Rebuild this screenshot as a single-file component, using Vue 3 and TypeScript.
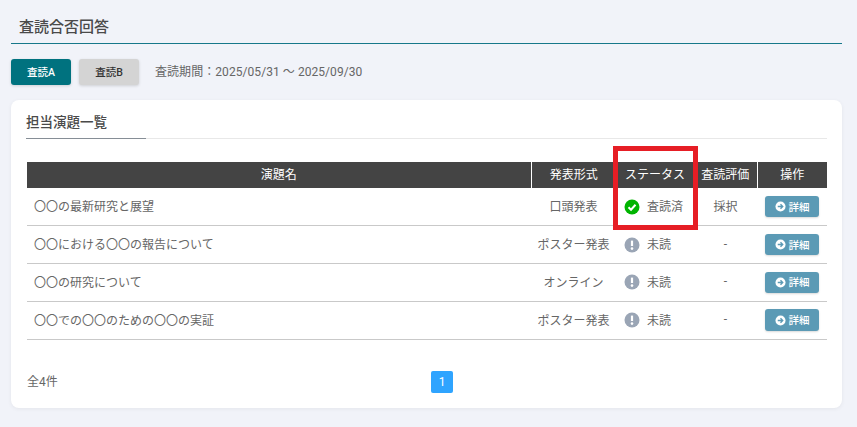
<script setup lang="ts">
interface Row { title: string; format: string; done: boolean; status: string; review: string }
const rows: Row[] = [
  { title: '〇〇の最新研究と展望', format: '口頭発表', done: true, status: '査読済', review: '採択' },
  { title: '〇〇における〇〇の報告について', format: 'ポスター発表', done: false, status: '未読', review: '-' },
  { title: '〇〇の研究について', format: 'オンライン', done: false, status: '未読', review: '-' },
  { title: '〇〇での〇〇のための〇〇の実証', format: 'ポスター発表', done: false, status: '未読', review: '-' },
]
</script>

<template>
  <div class="page">
    <h1 class="page-title">査読合否回答</h1>
    <div class="toolbar">
      <button class="tab tab-active">査読A</button>
      <button class="tab">査読B</button>
      <span class="period">査読期間：2025/05/31 〜 2025/09/30</span>
    </div>
    <section class="card">
      <h2 class="card-title"><span>担当演題一覧</span></h2>
      <table class="table">
        <colgroup>
          <col class="c1" /><col class="c2" /><col class="c3" /><col class="c4" /><col class="c5" />
        </colgroup>
        <thead>
          <tr>
            <th class="sep">演題名</th>
            <th>発表形式</th>
            <th>ステータス</th>
            <th class="sep">査読評価</th>
            <th>操作</th>
          </tr>
        </thead>
        <tbody>
          <tr v-for="r in rows" :key="r.title">
            <td class="title">{{ r.title }}</td>
            <td class="center text">{{ r.format }}</td>
            <td>
              <div class="status">
                <svg v-if="r.done" class="ico" viewBox="0 0 16 16">
                  <circle cx="8" cy="8" r="7.5" fill="#00b400" />
                  <path d="M4.5 8.3 7 10.7 11.5 5.8" fill="none" stroke="#fff" stroke-width="2" />
                </svg>
                <svg v-else class="ico" viewBox="0 0 16 16">
                  <circle cx="8" cy="8" r="7.5" fill="#9aa5b5" />
                  <path d="M8 3.6v5.4" stroke="#fff" stroke-width="2.2" />
                  <circle cx="8" cy="11.6" r="1.3" fill="#fff" />
                </svg>
                <span class="status-text">{{ r.status }}</span>
              </div>
            </td>
            <td class="center text">{{ r.review }}</td>
            <td class="center">
              <button class="detail">
                <svg class="ico-s" viewBox="0 0 12 12">
                  <circle cx="6" cy="6" r="5.5" fill="#fff" />
                  <path d="M3 6h5M6 3.6 8.4 6 6 8.4" fill="none" stroke="#5b9ab5" stroke-width="1.5" />
                </svg>
                <span class="detail-text">詳細</span>
              </button>
            </td>
          </tr>
        </tbody>
      </table>
      <div class="footer">
        <span class="count">全4件</span>
        <span class="page-num">1</span>
      </div>
    </section>
    <div class="highlight"></div>
  </div>
</template>

<style>
html, body { margin: 0; background: #f1f3f9; }
</style>

<style scoped>
.page {
  position: relative;
  width: 857px;
  height: 427px;
  box-sizing: border-box;
  padding: 11px 15px 0 11px;
  overflow: hidden;
  background: #f1f3f9;
  color: #444;
  font-family: Roboto, "Noto Sans CJK JP", sans-serif;
  font-size: 12px;
}
.page-title {
  margin: 0;
  height: 33px;
  padding: 6px 0 0 8px;
  box-sizing: border-box;
  font-size: 15px;
  line-height: 20px;
  font-weight: 500;
  color: #4a4a4a;
  border-bottom: 1px solid #16788a;
}
.toolbar {
  display: flex;
  align-items: center;
  margin-top: 15px;
  height: 26px;
}
.tab {
  width: 60px;
  height: 26px;
  margin-right: 8px;
  padding: 0 0 2px;
  border: 0;
  border-radius: 3px;
  background: #d4d4d4;
  color: #333;
  font: 500 10.5px Roboto, "Noto Sans CJK JP", sans-serif;
  box-shadow: 0 1px 3px rgba(0, 0, 0, 0.15);
}
.tab-active {
  background: #00727f;
  color: #fff;
}
.period {
  margin-left: 8px;
  padding-bottom: 4px;
  font-size: 12px;
  letter-spacing: 0.06px;
  color: #666;
}
.card {
  margin-top: 15px;
  height: 308px;
  box-sizing: border-box;
  padding: 11px 15px 0 15px;
  background: #fff;
  border-radius: 8px;
  box-shadow: 0 1px 4px rgba(0, 0, 0, 0.06);
}
.card-title {
  margin: 0;
  height: 28px;
  font-size: 13.5px;
  line-height: 22px;
  font-weight: 500;
  color: #4a4a4a;
  border-bottom: 1px solid #e8e8e8;
  box-sizing: border-box;
}
.card-title span {
  display: block;
  width: 120px;
  height: 28px;
  border-bottom: 1px solid #868e96;
  box-sizing: border-box;
}
.table {
  width: 800px;
  margin: 23px 0 0 1px;
  border-collapse: collapse;
  table-layout: fixed;
}
.c1 { width: 504px; }
.c2 { width: 85px; }
.c3 { width: 78px; }
.c4 { width: 63px; }
.c5 { width: 70px; }
th {
  box-sizing: border-box;
  height: 26px;
  padding: 0 0 4px;
  background: #444;
  color: #fff;
  font-size: 12px;
  font-weight: 400;
  text-align: center;
}
th.sep { border-right: 1px solid #fff; }
td {
  box-sizing: border-box;
  height: 37.75px;
  padding: 0;
  border-bottom: 1px solid #c9c9c9;
  color: #666;
}
td.title { padding: 0 0 2px 7px; }
td.center { text-align: center; }
td.text { padding-bottom: 2px; }
.status {
  display: flex;
  align-items: center;
  gap: 7px;
  padding-left: 8px;
}
.status-text { padding-bottom: 2px; }
.ico { width: 16px; height: 16px; flex: none; }
.detail {
  display: inline-flex;
  align-items: center;
  justify-content: center;
  gap: 3px;
  width: 54px;
  height: 21.5px;
  padding: 0;
  border: 0;
  border-radius: 3px;
  background: #5b9ab5;
  color: #fff;
  font: 500 10.5px Roboto, "Noto Sans CJK JP", sans-serif;
  box-shadow: 0 1px 2px rgba(0, 0, 0, 0.15);
}
.detail-text { padding-bottom: 1px; }
.ico-s { width: 11px; height: 11px; }
.footer {
  position: relative;
  display: flex;
  align-items: center;
  margin-top: 31px;
  height: 22px;
}
.count { margin-left: 1px; padding-bottom: 2px; font-size: 12px; color: #666; }
.page-num {
  position: absolute;
  left: 405px;
  top: 0;
  width: 22px;
  height: 22px;
  border-radius: 2px;
  background: #2fa4ff;
  color: #fff;
  font-size: 12px;
  line-height: 22px;
  text-align: center;
}
.highlight {
  position: absolute;
  left: 613px;
  top: 146px;
  width: 85px;
  height: 84px;
  box-sizing: border-box;
  border: 5px solid #e61e25;
}
</style>
